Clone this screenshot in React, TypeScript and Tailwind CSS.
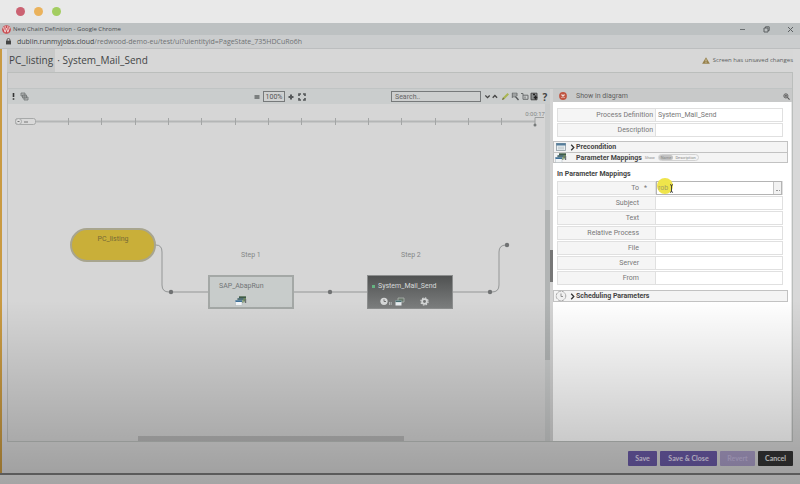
import React from "react";

const sans = "font-[Roboto,'Liberation_Sans',sans-serif]";
const chrome = "font-['Open_Sans','Noto_Sans',sans-serif]";

function MappingIcon({ className }: { className: string }) {
  return (
    <svg viewBox="0 0 12 10" className={className} aria-hidden="true">
      <rect x="4" y="0.5" width="7" height="5" fill="#6f8a5c" />
      <rect x="4" y="0.5" width="7" height="1.5" fill="#3f5a4a" />
      <path d="M10.5 3v4" stroke="#6b6f72" strokeWidth="1.4" />
      <rect x="2.5" y="2.5" width="6" height="4.5" fill="#8aa07a" />
      <rect x="2.5" y="2.3" width="6" height="1.4" fill="#3d5f78" />
      <rect x="0.5" y="4.5" width="6.5" height="5" fill="#f2f5f7" stroke="#a9b3ba" strokeWidth="0.5" />
      <rect x="0.5" y="4.3" width="6.5" height="1.7" fill="#3f7199" />
    </svg>
  );
}

function Gear({ className, color }: { className: string; color: string }) {
  return (
    <svg viewBox="0 0 10 10" className={className} aria-hidden="true">
      <circle cx="5" cy="5" r="4" fill="none" stroke={color} strokeWidth="1.4" strokeDasharray="1.7 1.44" />
      <circle cx="5" cy="5" r="2.6" fill="none" stroke={color} strokeWidth="1.9" />
    </svg>
  );
}

function Chevron({ className }: { className: string }) {
  return (
    <svg viewBox="0 0 5 7" className={className} aria-hidden="true">
      <path d="M1.2 0.8L3.8 3.5L1.2 6.2" fill="none" stroke="#333" strokeWidth="1.3" />
    </svg>
  );
}

function WindowTop() {
  return (
    <>
      <div className="flex h-[23px] items-center gap-[9px] bg-[#e9e9e9] pl-4">
        <span className="size-[9px] rounded-full bg-[#cb6272]" />
        <span className="size-[9px] rounded-full bg-[#eab25c]" />
        <span className="size-[9px] rounded-full bg-[#a3cd60]" />
      </div>
      <div className={`flex h-3 items-center bg-[#bdc1c2] pr-[6px] pl-[2px] text-[6px] leading-3 text-[#4a4e50] ${chrome}`}>
        <svg viewBox="0 0 10 10" className="mr-[2px] size-[9px]" aria-hidden="true">
          <circle cx="5" cy="5" r="4.8" fill="#c9484d" />
          <path d="M1.5 2.5L3.5 8L5 3.5L6.5 8L8.5 2.5M3.5 1v3M6.5 1v3" fill="none" stroke="#f3dcdc" strokeWidth="1" />
        </svg>
        <span>New Chain Definition - Google Chrome</span>
        <div className="ml-auto flex items-center gap-[17px]">
          <button type="button" aria-label="Minimize">
            <svg viewBox="0 0 7 7" className="size-[7px]"><path d="M1 3.5h5" stroke="#6c7072" /></svg>
          </button>
          <button type="button" aria-label="Restore">
            <svg viewBox="0 0 7 7" className="size-[7px]"><path d="M1 2h4v4H1zM2.5 2V.8h3.7v3.7H5" fill="none" stroke="#5c6062" /></svg>
          </button>
          <button type="button" aria-label="Close">
            <svg viewBox="0 0 7 7" className="size-[7px]"><path d="M1 1l5 5M6 1L1 6" stroke="#5c6062" /></svg>
          </button>
        </div>
      </div>
      <div className={`flex h-[14px] items-center gap-[6px] border-b border-[#bcbebf] bg-[#cbcdce] pl-[6px] text-[7px] leading-[13px] text-[#6f7274] ${chrome}`}>
        <svg viewBox="0 0 6 8" className="h-[7px] w-[5px]" aria-hidden="true">
          <rect y="3" width="6" height="4.5" fill="#444" />
          <path d="M1.3 3.5V2a1.7 1.7 0 0 1 3.4 0v1.5" fill="none" stroke="#444" />
        </svg>
        <span>
          <span className="text-[#424546]">dublin.runmyjobs.cloud</span>/redwood-demo-eu/test/ui?uientityid=PageState_735HDCuRo6h
        </span>
      </div>
    </>
  );
}

function DiagramToolbar() {
  return (
    <div className="grid h-[15px] grid-cols-[1fr_auto_1fr] items-center bg-[#cacdcd] pr-[2px] pl-1">
      <svg viewBox="0 0 17 9" className="h-[9px] w-[17px]" aria-hidden="true">
        <path d="M1.5 1v4M1.5 6.3v1.5" stroke="#333" strokeWidth="1.6" />
        <path d="M9 1h4v3H9zM10.5 3h4v3h-4zM12 5h4v3h-4z" fill="#b3b5b5" stroke="#707374" strokeWidth="0.8" />
      </svg>
      <div className="flex items-center gap-[3px]">
        <button type="button" aria-label="Zoom out">
          <svg viewBox="0 0 6 6" className="size-[6px]"><path d="M0.5 2h5M0.5 4h5" stroke="#626566" strokeWidth="1.3" /></svg>
        </button>
        <input aria-label="Zoom level" defaultValue="100%" className={`h-[11px] w-[22px] border border-[#777a7b] bg-[#cfd1d1] text-center text-[7px] leading-[9px] text-[#555] ${sans}`} />
        <button type="button" aria-label="Zoom in">
          <svg viewBox="0 0 6 6" className="size-[6px]"><path d="M0.5 3h5M3 0.5v5" stroke="#55585a" strokeWidth="2" /></svg>
        </button>
        <button type="button" aria-label="Fit to screen" className="ml-px">
          <svg viewBox="0 0 8 8" className="size-2"><path d="M1 3V1h2M5 1h2v2M7 5v2H5M3 7H1V5" fill="none" stroke="#55585a" strokeWidth="1.7" /></svg>
        </button>
      </div>
      <div className="flex items-center justify-end">
        <input aria-label="Search" placeholder="Search.." className={`mr-1 h-[11px] w-[90px] border border-[#777a7b] bg-[#cdcfcf] px-[3px] text-[7px] leading-[9px] placeholder:text-[#666] ${sans}`} />
        <svg viewBox="0 0 54 9" className="h-[9px] w-[54px]" aria-hidden="true">
          <path d="M0.3 3.5L2.5 5.7L4.7 3.5M7.7 5.7L9.9 3.5L12.1 5.7" fill="none" stroke="#444" strokeWidth="1.3" />
          <path d="M17 8L18 5.5L22.5 1L24 2.5L19.5 7z" fill="#a9b653" />
          <path d="M17 8L18 5.5L19.5 7z" fill="#6b6b50" />
          <path d="M27 1.2h5M27 3h5M27 4.8h4M27.3 1v5M32 1v3" stroke="#6a6d6e" strokeWidth="0.9" />
          <path d="M30.5 4.5L33.5 8" stroke="#55585a" strokeWidth="1.3" />
          <path d="M36 1.5h2v5.8h5V3.2h-5M40 4.5v2" fill="none" stroke="#6a6d6e" strokeWidth="1" />
          <path d="M46 1.2h6v6.6h-6z" fill="#8b8e8f" stroke="#444" strokeWidth="0.9" />
          <path d="M48 2.6h2M50.5 3.5v4M48.7 5.6h3.6" stroke="#222" strokeWidth="1.5" />
        </svg>
        <button type="button" aria-label="Help" className={`ml-[3px] w-[6px] text-[10px] leading-[14px] font-bold text-[#444] ${chrome}`}>?</button>
      </div>
    </div>
  );
}

const ticks = [60, 93, 127, 160, 193, 227, 260, 293, 327, 360, 393, 427, 460, 493];

function Canvas() {
  return (
    <div className={`relative flex-1 overflow-hidden bg-[#d6d6d6] text-[7px] leading-[9px] text-[#66696a] ${sans}`}>
      <svg width="542" height="210" className="absolute top-0 left-0" aria-hidden="true">
        <path d="M27 17.5H527" stroke="#b4b6b6" strokeWidth="2" />
        {ticks.map((x) => (
          <path key={x} d={`M${x}.5 14v7`} stroke="#a3a5a5" />
        ))}
        <rect x="7.5" y="14.5" width="20" height="6" rx="2" fill="#d9d9d9" stroke="#a7a9a9" />
        <circle cx="10.5" cy="17.5" r="3" fill="#dcdcdc" stroke="#a7a9a9" />
        <path d="M9.5 17.5h2M16 18h4" stroke="#777" />
        <path d="M527 22V13.5h9" fill="none" stroke="#9c9e9e" />
        <circle cx="527" cy="21" r="1.5" fill="#777a7a" />
        <path d="M147 141h1q6 0 6 7v33q0 7 7 7h39M285 188h74M444 188h40q7 0 7-7v-33q0-7 7-7" fill="none" stroke="#949696" />
        {[[163, 188], [322, 188], [482, 188], [499, 141]].map(([x, y]) => (
          <circle key={`${x}-${y}`} cx={x} cy={y} r="2.2" fill="#707273" />
        ))}
      </svg>
      <span className="absolute top-[5px] right-[5px] text-[6px] text-[#858888]">0:00:17</span>
      <button type="button" className="absolute top-[124px] left-[62px] h-[34px] w-[86px] rounded-[17px] border-2 border-[#a8a58e] bg-[#c9af39] pb-3 text-center text-[#766a36]">
        PC_listing
      </button>
      <span className="absolute top-[147px] left-[233px] text-[#858787]">Step 1</span>
      <span className="absolute top-[147px] left-[393px] text-[#858787]">Step 2</span>
      <button type="button" className="absolute top-[171px] left-[200px] flex h-[34px] w-[86px] flex-col items-start border-2 border-[#a4a8a6] bg-[#c8cccb] pt-[5px] pl-[9px] text-[#707576]">
        SAP_AbapRun
        <MappingIcon className="mt-[5px] ml-4 h-[10px] w-3" />
      </button>
      <button type="button" className="absolute top-[171px] left-[359px] flex h-[34px] w-[86px] flex-col items-start border border-[#8c8e8e] bg-linear-to-b from-[#505252] to-[#7c7e7e] pt-[6px] pl-1 text-[#d7d9d9]">
        <span className="flex items-center gap-[3px]">
          <span className="size-[3px] bg-[#65b381]" />
          System_Mail_Send
        </span>
        <span className="mt-[6px] ml-2 flex items-center">
          <svg viewBox="0 0 12 9" className="h-[9px] w-3" aria-hidden="true">
            <circle cx="4" cy="4.3" r="3.6" fill="#d5d7d7" />
            <path d="M4 2.3v2.2h2" fill="none" stroke="#666" strokeWidth="0.9" />
            <path d="M9.5 5v3M11.2 5v3" stroke="#c0c3c3" strokeWidth="0.8" />
          </svg>
          <svg viewBox="0 0 12 9" className="ml-[2px] h-[9px] w-3" aria-hidden="true">
            <path d="M4 1h6v4H4z" fill="#68776a" stroke="#aeb4ae" strokeWidth="0.8" />
            <rect x="1.5" y="3.5" width="6" height="5" fill="#e7ecef" />
            <rect x="1.5" y="3.5" width="6" height="1.6" fill="#456d70" />
          </svg>
          <Gear className="ml-[14px] size-[9px]" color="#d3d5d5" />
        </span>
      </button>
      <div className="absolute inset-y-0 right-0 w-[5px] bg-[#c9cbcb]">
        <div className="mt-[106px] h-[150px] bg-[#b1b4b4]" />
      </div>
      <div className="absolute bottom-0 left-[24%] h-[5px] w-[49%] bg-[#b7b7b7]" />
    </div>
  );
}

function Field({ label, value, wide, required, picker }: { label: string; value?: string; wide?: boolean; required?: boolean; picker?: boolean }) {
  return (
    <label className="flex h-[14px] border border-[#e0e0e0] text-[7px] leading-3 text-[#777]">
      <span className={`flex w-[98px] shrink-0 justify-end border-r border-[#e0e0e0] bg-[#f5f5f5] ${wide ? "pr-[2px]" : "pr-4"}`}>
        <span className="relative">
          {label}
          {required && <span className="absolute top-0 -right-2">*</span>}
        </span>
      </span>
      {picker ? (
        <span className="relative -my-px flex min-w-0 flex-1 border border-[#b4b4b4]">
          <span className="absolute -top-1 left-0 size-4 rounded-full bg-[#efe44b]" />
          <input defaultValue={value} className="relative min-w-0 flex-1 bg-transparent pl-px text-[#a3a064] outline-none" />
          <svg viewBox="0 0 5 9" className="absolute top-[2px] left-3 h-[9px] w-[5px]" aria-hidden="true">
            <path d="M1 .7q1.5 0 1.5 1v5.6q0 1 1.5 1M4 .7q-1.5 0-1.5 1M1 8.3q1.5 0 1.5-1" fill="none" stroke="#333" strokeWidth="0.9" />
          </svg>
          <button type="button" aria-label="Choose value" className="flex w-2 items-end justify-center border-l border-[#c4c4c4] bg-[#f2f2f2] pb-[3px]">
            <span className="w-1 border-b border-dotted border-[#999]" />
          </button>
        </span>
      ) : (
        <input defaultValue={value} className="min-w-0 flex-1 bg-white pl-[2px] outline-none" />
      )}
    </label>
  );
}

const parameters = ["Subject", "Text", "Relative Process", "File", "Server", "From"];

function Details() {
  return (
    <section className={`flex w-[239px] shrink-0 flex-col ${sans}`}>
      <div className="flex h-[13px] items-center bg-[#c8c9c9] pt-px pr-[2px] pl-[6px] text-[7px] leading-3 text-[#5f6161]">
        <svg viewBox="0 0 8 8" className="size-2" aria-hidden="true">
          <circle cx="4" cy="4" r="3.9" fill="#c05440" />
          <path d="M2.5 2.5l3 3M5.5 2.5l-3 3" stroke="#f0e0dc" strokeWidth="1.2" />
        </svg>
        <button type="button" className="ml-[9px]">Show in diagram</button>
        <svg viewBox="0 0 8 8" className="ml-auto size-[7px]" aria-hidden="true">
          <circle cx="3.3" cy="3.3" r="2.4" fill="#aaa" stroke="#666" strokeWidth="1.1" />
          <path d="M5 5l2.5 2.5M2.2 3.3h2.2" stroke="#555" strokeWidth="1.2" />
        </svg>
      </div>
      <div className="flex-1 border-r border-[#e6e6e6] bg-white pt-[6px]">
        <div className="mr-2 ml-1 flex flex-col gap-px">
          <Field label="Process Definition" value="System_Mail_Send" wide />
          <Field label="Description" wide />
        </div>
        <div className="mt-1 mr-[3px] border border-[#c2c2c2] bg-[#f4f4f4] text-[7px] leading-[10px] font-bold text-[#444]">
          <button type="button" className="flex h-[10px] w-full items-center pl-[2px]">
            <svg viewBox="0 0 10 8" className="h-2 w-[10px]" aria-hidden="true">
              <rect x="0.5" y="0.5" width="9" height="7" fill="#e9eef0" stroke="#8e9ba3" strokeWidth="0.8" />
              <rect x="0.3" y="0.2" width="9.4" height="2.3" fill="#557d9b" />
              <path d="M2 4.2h6M2 5.8h6" stroke="#b8c2c8" strokeWidth="0.8" />
            </svg>
            <Chevron className="mr-px ml-1 h-[7px] w-[5px]" />
            Precondition
          </button>
          <div className="flex h-[10px] items-center border-t border-[#c2c2c2] pl-px">
            <MappingIcon className="h-[10px] w-3" />
            <button type="button" className="ml-[9px]">Parameter Mappings</button>
            <span className="ml-[3px] text-[4px] font-normal text-[#888]">Show</span>
            <span className="ml-[3px] flex rounded-full border border-[#d2d2d2] text-[4px] leading-[5px] font-normal text-[#888]">
              <button type="button" className="rounded-full bg-[#c3c3c3] px-[2px]">Name</button>
              <button type="button" className="px-[2px]">Description</button>
            </span>
          </div>
        </div>
        <h2 className="mt-[6px] ml-1 text-[7px] leading-[10px] font-bold text-[#444]">In Parameter Mappings</h2>
        <div className="mt-[2px] mr-2 ml-1 flex flex-col gap-px">
          <Field label="To" value="rob" required picker />
          {parameters.map((name) => (
            <Field key={name} label={name} />
          ))}
        </div>
        <div className="mt-[5px] mr-[3px] border border-[#c2c2c2] bg-[#f4f4f4] text-[7px] leading-[10px] font-bold text-[#444]">
          <button type="button" className="flex h-[10px] w-full items-center pl-px">
            <svg viewBox="0 0 12 12" className="size-3" aria-hidden="true">
              <circle cx="6" cy="6" r="4.8" fill="#f0f0f0" stroke="#aaa" strokeWidth="1" strokeDasharray="3 .8" />
              <path d="M6 3.5v3h2" fill="none" stroke="#888" strokeWidth="0.9" />
            </svg>
            <Chevron className="mr-px ml-[3px] h-[7px] w-[5px]" />
            Scheduling Parameters
          </button>
        </div>
      </div>
    </section>
  );
}

const action = "h-[15px] rounded-[1px] text-[7px] leading-[15px] font-bold";

export default function App() {
  return (
    <div className="relative flex min-h-screen flex-col bg-[#d8d8d8]">
      <WindowTop />
      <div className="flex flex-1 border-b-2 border-[#7a7a7a]">
        <div className="w-[2px] bg-[#c99a42]" />
        <div className="w-[5px] bg-[#d8d8dc]" />
        <div className="mr-[7px] flex min-w-0 flex-1 flex-col">
          <header className={`flex h-[23px] items-center border-l border-[#c5c9c5] bg-[#d7d7d7] ${chrome}`}>
            <h1 className="flex text-[10px] leading-[23px] text-[#434546]">
              <span className="bg-[#c8c9c9] pr-[2px] pl-px">PC_listing</span>
              <span className="pl-[2px]">· System_Mail_Send</span>
            </h1>
            <p className="ml-auto flex items-center gap-[3px] text-[6px] text-[#5c5f60]">
              <svg viewBox="0 0 8 7" className="h-[7px] w-2" aria-hidden="true">
                <path d="M4 0.2L7.9 6.8H0.1z" fill="#96804b" />
                <path d="M4 2.3v2.2M4 5.2v.9" stroke="#ddd5b8" strokeWidth="0.9" />
              </svg>
              Screen has unsaved changes
            </p>
          </header>
          <main className="flex flex-1 flex-col border border-[#bbbebc] bg-[#cfcfcf]">
            <div className="h-4 border-b border-[#c0c4c4]" />
            <div className="flex flex-1">
              <section className="flex min-w-0 flex-1 flex-col">
                <DiagramToolbar />
                <Canvas />
              </section>
              <div className="flex w-[3px] flex-col bg-[#d3d3d3]">
                <div className="mt-[161px] h-8 bg-[#777]" />
              </div>
              <Details />
            </div>
          </main>
          <footer className="flex h-[31px] items-center justify-end gap-[3px] pt-px font-[Lato,'Open_Sans',sans-serif]">
            <button type="button" className={`${action} w-[29px] bg-[#6a5aa6] text-[#e0dcf0]`}>Save</button>
            <button type="button" className={`${action} w-[57px] bg-[#6a5aa6] text-[#e0dcf0]`}>Save &amp; Close</button>
            <button type="button" disabled className={`${action} w-[35px] bg-[#a99dc6] text-[#c3b8de]`}>Revert</button>
            <button type="button" className={`${action} w-[35px] bg-[#343434] text-[#e4e4e4]`}>Cancel</button>
          </footer>
        </div>
      </div>
      <div className="h-[9px] bg-[#e2e2e2]" />
      <div className="pointer-events-none absolute inset-0 bg-linear-to-b from-transparent from-62% to-black/27" />
    </div>
  );
}
